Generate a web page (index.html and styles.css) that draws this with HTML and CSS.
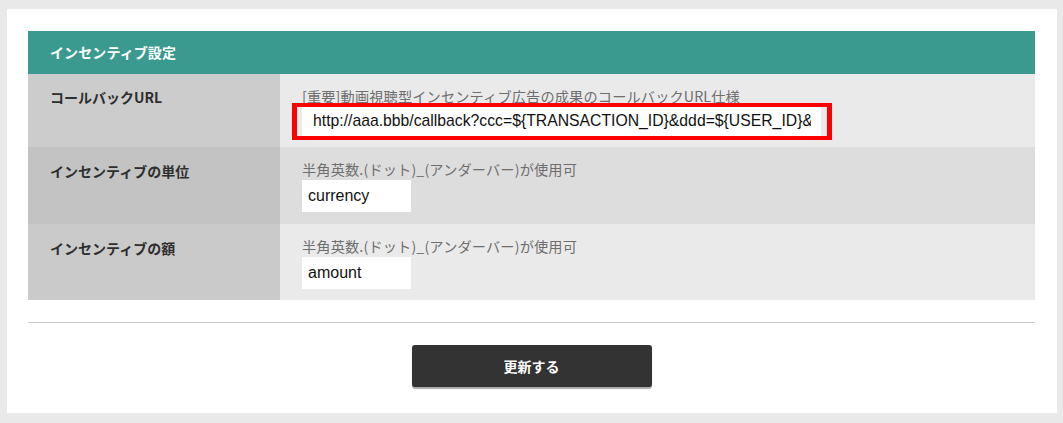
FILE: index.html
```html
<!DOCTYPE html>
<html lang="ja">
<head>
<meta charset="utf-8">
<title>インセンティブ設定</title>
<link rel="stylesheet" href="styles.css">
</head>
<body>
<div class="card">
  <div class="table">
    <div class="table-head">インセンティブ設定</div>
    <div class="row row-1">
      <div class="label">コールバックURL</div>
      <div class="field">
        <div class="help help-tight">[重要]動画視聴型インセンティブ広告の成果のコールバックURL仕様</div>
        <div class="highlight">
          <input class="input input-wide" type="text" value="http://aaa.bbb/callback?ccc=${TRANSACTION_ID}&amp;ddd=${USER_ID}&amp;eee=${AMOUNT}" readonly>
        </div>
      </div>
    </div>
    <div class="row row-2">
      <div class="label">インセンティブの単位</div>
      <div class="field">
        <div class="help">半角英数.(ドット)_(アンダーバー)が使用可</div>
        <input class="input input-small" type="text" value="currency">
      </div>
    </div>
    <div class="row row-3">
      <div class="label">インセンティブの額</div>
      <div class="field">
        <div class="help">半角英数.(ドット)_(アンダーバー)が使用可</div>
        <input class="input input-small" type="text" value="amount">
      </div>
    </div>
  </div>
  <hr class="divider">
  <div class="actions">
    <button class="btn" type="button">更新する</button>
  </div>
</div>
</body>
</html>
```
FILE: styles.css
```css
* { box-sizing: border-box; }
html, body { margin: 0; }
body {
  background: #e9e9e9;
  padding: 9px 6px 10px 7px;
  font-family: "Noto Sans CJK JP", "Liberation Sans", sans-serif;
  color: #333;
}
.card {
  background: #fff;
  height: 404px;
  padding: 22px 22px 0 21px;
}
.table {
  display: flex;
  flex-direction: column;
}
.table-head {
  background: #3b9a8f;
  color: #fff;
  font-weight: bold;
  font-size: 14px;
  height: 43px;
  line-height: 43px;
  padding-left: 22px;
  letter-spacing: 0.1px;
}
.row {
  display: grid;
  grid-template-columns: 252px 1fr;
}
.row-1 { height: 73px; }
.row-2 { height: 77px; }
.row-3 { height: 76px; }
.label {
  font-size: 14px;
  font-weight: bold;
  line-height: 20px;
  padding: 14px 0 0 22px;
  color: #2e2e2e;
}
.row-1 .label { background: #cccccc; padding-top: 13px; }
.row-2 .label { background: #c3c3c3; }
.row-3 .label { background: #cacaca; }
.field {
  padding: 12px 22px 0 22px;
  display: flex;
  flex-direction: column;
  align-items: flex-start;
}
.row-1 .field { background: #eaeaea; }
.row-2 .field { background: #dddddd; }
.row-3 .field { background: #eaeaea; }
.help {
  font-size: 14.2px;
  line-height: 21px;
  color: #6e6e6e;
  white-space: nowrap;
  letter-spacing: 0.15px;
}
.help-tight { line-height: 18px; padding-top: 1px; }
.highlight {
  position: relative;
}
.highlight::after {
  content: "";
  position: absolute;
  left: -10px;
  right: -11px;
  top: -2px;
  bottom: -3px;
  border: solid #ff0000;
  border-width: 4px 5px;
  pointer-events: none;
}
.input {
  display: block;
  height: 32px;
  border: none;
  outline: none;
  background: #fff;
  font-family: "Liberation Sans", Arial, sans-serif;
  font-size: 16px;
  color: #111;
  margin: 0;
}
.input-wide {
  width: 519px;
  padding: 0 10px 0 11px;
  font-size: 15.75px;
}
.input-small {
  width: 109px;
  padding: 0 6px;
}
.divider {
  border: none;
  border-top: 1px solid #c8c8c8;
  margin: 22px 0 0 0;
  height: 0;
}
.actions {
  display: flex;
  justify-content: center;
  padding-top: 22px;
}
.btn {
  width: 240px;
  height: 42px;
  background: #333;
  color: #fff;
  border: none;
  border-radius: 3px;
  box-shadow: 0 2px 1px #aaa;
  font-family: "Noto Sans CJK JP", sans-serif;
  font-weight: bold;
  font-size: 14px;
  cursor: pointer;
}
```
